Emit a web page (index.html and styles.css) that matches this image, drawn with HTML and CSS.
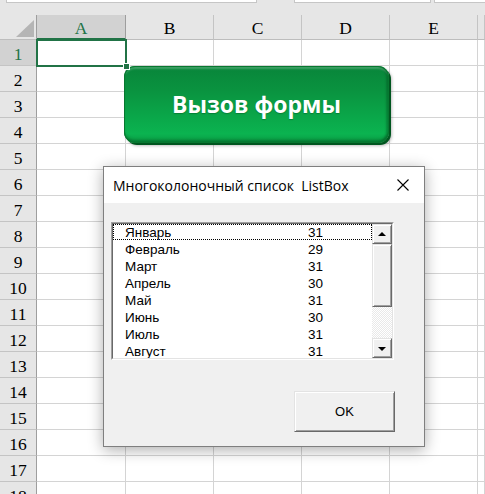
FILE: index.html
```html
<!DOCTYPE html>
<html lang="ru">
<head>
<meta charset="utf-8">
<title>ListBox</title>
<link rel="stylesheet" href="styles.css">
</head>
<body>
<div class="topbar">
  <span class="fbox fbox-name"></span>
  <span class="fbox fbox-mid"></span>
  <span class="fbox fbox-right"></span>
</div>
<div class="sheet">
  <div class="corner"><span class="tri"></span></div>
  <div class="ch sel">A</div><div class="ch">B</div><div class="ch">C</div><div class="ch">D</div><div class="ch">E</div><div class="ch"></div>

  <div class="rh sel">1</div><div class="c active"></div><div class="c"></div><div class="c"></div><div class="c"></div><div class="c"></div><div class="c"></div>
  <div class="rh">2</div><div class="c"></div><div class="c"></div><div class="c"></div><div class="c"></div><div class="c"></div><div class="c"></div>
  <div class="rh">3</div><div class="c"></div><div class="c"></div><div class="c"></div><div class="c"></div><div class="c"></div><div class="c"></div>
  <div class="rh">4</div><div class="c"></div><div class="c"></div><div class="c"></div><div class="c"></div><div class="c"></div><div class="c"></div>
  <div class="rh">5</div><div class="c"></div><div class="c"></div><div class="c"></div><div class="c"></div><div class="c"></div><div class="c"></div>
  <div class="rh">6</div><div class="c"></div><div class="c"></div><div class="c"></div><div class="c"></div><div class="c"></div><div class="c"></div>
  <div class="rh">7</div><div class="c"></div><div class="c"></div><div class="c"></div><div class="c"></div><div class="c"></div><div class="c"></div>
  <div class="rh">8</div><div class="c"></div><div class="c"></div><div class="c"></div><div class="c"></div><div class="c"></div><div class="c"></div>
  <div class="rh">9</div><div class="c"></div><div class="c"></div><div class="c"></div><div class="c"></div><div class="c"></div><div class="c"></div>
  <div class="rh">10</div><div class="c"></div><div class="c"></div><div class="c"></div><div class="c"></div><div class="c"></div><div class="c"></div>
  <div class="rh">11</div><div class="c"></div><div class="c"></div><div class="c"></div><div class="c"></div><div class="c"></div><div class="c"></div>
  <div class="rh">12</div><div class="c"></div><div class="c"></div><div class="c"></div><div class="c"></div><div class="c"></div><div class="c"></div>
  <div class="rh">13</div><div class="c"></div><div class="c"></div><div class="c"></div><div class="c"></div><div class="c"></div><div class="c"></div>
  <div class="rh">14</div><div class="c"></div><div class="c"></div><div class="c"></div><div class="c"></div><div class="c"></div><div class="c"></div>
  <div class="rh">15</div><div class="c"></div><div class="c"></div><div class="c"></div><div class="c"></div><div class="c"></div><div class="c"></div>
  <div class="rh">16</div><div class="c"></div><div class="c"></div><div class="c"></div><div class="c"></div><div class="c"></div><div class="c"></div>
  <div class="rh">17</div><div class="c"></div><div class="c"></div><div class="c"></div><div class="c"></div><div class="c"></div><div class="c"></div>
  <div class="rh">18</div><div class="c"></div><div class="c"></div><div class="c"></div><div class="c"></div><div class="c"></div><div class="c"></div>
</div>

<div class="macro-btn">Вызов формы</div>

<div class="dialog">
  <div class="titlebar">
    <span class="title">Многоколоночный список  ListBox</span>
    <svg class="close" width="12" height="12" viewBox="0 0 12 12"><path d="M0.5 0.5 L11.5 11.5 M11.5 0.5 L0.5 11.5" stroke="#000" stroke-width="1.1" fill="none"/></svg>
  </div>
  <div class="dlg-body">
    <div class="listbox">
      <div class="lb-inner">
        <div class="items">
          <div class="item focus"><span class="m">Январь</span><span>31</span></div>
          <div class="item"><span class="m">Февраль</span><span>29</span></div>
          <div class="item"><span class="m">Март</span><span>31</span></div>
          <div class="item"><span class="m">Апрель</span><span>30</span></div>
          <div class="item"><span class="m">Май</span><span>31</span></div>
          <div class="item"><span class="m">Июнь</span><span>30</span></div>
          <div class="item"><span class="m">Июль</span><span>31</span></div>
          <div class="item"><span class="m">Август</span><span>31</span></div>
        </div>
        <div class="vscroll">
          <div class="sbtn"><span class="arr-up"></span></div>
          <div class="thumb"></div>
          <div class="track"></div>
          <div class="sbtn"><span class="arr-down"></span></div>
        </div>
      </div>
    </div>
    <button class="ok">OK</button>
  </div>
</div>
</body>
</html>
```

FILE: styles.css
```css
html, body {
  margin: 0;
  padding: 0;
}
body {
  width: 485px;
  height: 494px;
  overflow: hidden;
  position: relative;
  background: #e6e6e6;
  font-family: "Liberation Serif", "Times New Roman", serif;
}

/* formula bar remnants */
.topbar {
  height: 15px;
  display: flex;
  align-items: flex-start;
}
.fbox {
  display: block;
  height: 2px;
  background: #fff;
  border: 1px solid #c6c6c6;
  border-top: none;
}
.fbox-name { margin-left: 6px; width: 249px; }
.fbox-mid { margin-left: 37px; width: 135px; }
.fbox-right { margin-left: 3px; flex: 1; border-right: none; }

/* sheet grid */
.sheet {
  display: grid;
  grid-template-columns: 37px 89px 88px 88px 88px 88px minmax(0, 1fr);
  grid-template-rows: 25px;
  grid-auto-rows: 26px;
  width: 485px;
}
.corner {
  background: #e6e6e6;
  border-right: 1px solid #9e9e9e;
  border-bottom: 1px solid #bdbdbd;
  box-sizing: border-box;
  display: flex;
  justify-content: flex-end;
  align-items: flex-end;
  padding: 0 2px 2px 0;
}
.tri {
  display: block;
  width: 18px;
  height: 17px;
  background: #b5b5b5;
  clip-path: polygon(100% 0, 100% 100%, 0 100%);
}
.ch, .rh {
  background: #e6e6e6;
  box-sizing: border-box;
  display: flex;
  align-items: center;
  justify-content: center;
  font-size: 17.5px;
  color: #000;
  padding-top: 3px;
}
.ch {
  border-right: 1px solid #c4c4c4;
  border-bottom: 1px solid #bdbdbd;
}
.ch.sel {
  background: #d2d2d2;
  color: #217346;
  border-bottom: 2px solid #217346;
  border-right-color: #9e9e9e;
}
.rh {
  border-right: 1px solid #9e9e9e;
  border-bottom: 1px solid #c4c4c4;
}
.rh.sel {
  background: #d2d2d2;
  color: #217346;
}
.c {
  background: #fff;
  box-sizing: border-box;
  border-right: 1px solid #d4d4d4;
  border-bottom: 1px solid #d4d4d4;
}
.c.active {
  position: relative;
}
.c.active::before {
  content: "";
  position: absolute;
  left: -1px;
  top: -1px;
  right: -2px;
  bottom: -2px;
  border: 2px solid #217346;
  z-index: 1;
}
.c.active::after {
  content: "";
  position: absolute;
  right: -4px;
  bottom: -4px;
  width: 5px;
  height: 5px;
  background: #217346;
  box-shadow: 0 0 0 1px #fff;
  z-index: 2;
}

/* green macro button (shape over the grid) */
.macro-btn {
  position: absolute;
  left: 124px;
  top: 66px;
  width: 265px;
  height: 77px;
  box-sizing: border-box;
  border-radius: 11px;
  background: linear-gradient(180deg, #08853a 0%, #0a923f 30%, #0aa84a 68%, #0bb350 88%, #0a9a44 100%);
  box-shadow:
    inset 0 0 0 1px #077830,
    inset 0 4px 2px -1px rgba(255, 255, 255, 0.22),
    inset 0 -4px 3px -1px rgba(0, 70, 25, 0.45),
    inset -3px 0 2px rgba(0, 70, 25, 0.35),
    2px 2px 0 #00561f,
    3px 3px 3px rgba(0, 0, 0, 0.25);
  display: flex;
  align-items: center;
  justify-content: center;
  color: #fff;
  font-family: "Open Sans", "Noto Sans", sans-serif;
  font-weight: 700;
  font-size: 23px;
  text-shadow: 0 1px 1px rgba(0, 60, 20, 0.35);
  padding-bottom: 2px;
}

/* user form dialog */
.dialog {
  position: absolute;
  left: 103px;
  top: 166px;
  width: 322px;
  height: 281px;
  box-sizing: border-box;
  border: 1px solid #7f7f7f;
  background: #f0f0f0;
  box-shadow: 0 3px 14px rgba(0, 0, 0, 0.32);
  font-family: "Liberation Sans", Arial, sans-serif;
  color: #000;
}
.titlebar {
  height: 36px;
  background: #fff;
  display: flex;
  align-items: center;
  padding: 0 15px 0 9px;
}
.title {
  white-space: pre;
  font-family: "Open Sans", "Noto Sans", sans-serif;
  font-size: 14px;
  padding-top: 1px;
}
.close {
  margin-left: auto;
  display: block;
}
.dlg-body {
  padding: 19px 0 0 7px;
  display: flex;
  flex-direction: column;
  align-items: flex-start;
}
.listbox {
  width: 283px;
  height: 138px;
  box-sizing: border-box;
  border: 1px solid;
  border-color: #a0a0a0 #ffffff #ffffff #a0a0a0;
}
.lb-inner {
  height: 100%;
  box-sizing: border-box;
  border: 1px solid;
  border-color: #696969 #e3e3e3 #e3e3e3 #696969;
  background: #fff;
  display: flex;
}
.items {
  flex: 1;
  overflow: hidden;
  font-size: 13.5px;
}
.item {
  height: 17px;
  box-sizing: border-box;
  display: flex;
  align-items: center;
  padding-left: 12px;
  line-height: 17px;
}
.item .m {
  width: 183px;
}
.item.focus {
  outline: 1px dotted #000;
  outline-offset: -1px;
  height: 16px;
  margin-bottom: 1px;
}
.vscroll {
  width: 20px;
  display: flex;
  flex-direction: column;
}
.sbtn, .thumb {
  box-sizing: border-box;
  background: #f0f0f0;
  border: 1px solid;
  border-color: #e3e3e3 #696969 #696969 #e3e3e3;
  box-shadow: inset 1px 1px 0 #fff, inset -1px -1px 0 #a0a0a0;
}
.sbtn {
  height: 20px;
  display: flex;
  align-items: center;
  justify-content: center;
}
.thumb {
  height: 63px;
}
.track {
  flex: 1;
  background: repeating-conic-gradient(#ffffff 0 25%, #e9e9e9 0 50%) 0 0 / 2px 2px;
}
.arr-up, .arr-down {
  display: block;
  width: 0;
  height: 0;
  border-left: 4px solid transparent;
  border-right: 4px solid transparent;
}
.arr-up { border-bottom: 4px solid #000; margin-top: -1px; }
.arr-down { border-top: 4px solid #000; margin-top: 1px; }

.ok {
  margin: 31px 0 0 183px;
  width: 101px;
  height: 41px;
  box-sizing: border-box;
  background: #f0f0f0;
  border: 1px solid;
  border-color: #e3e3e3 #696969 #696969 #e3e3e3;
  box-shadow: inset 1px 1px 0 #fff, inset -1px -1px 0 #a0a0a0;
  font-family: "Liberation Sans", Arial, sans-serif;
  font-size: 13px;
  color: #000;
  padding: 0;
}
```
